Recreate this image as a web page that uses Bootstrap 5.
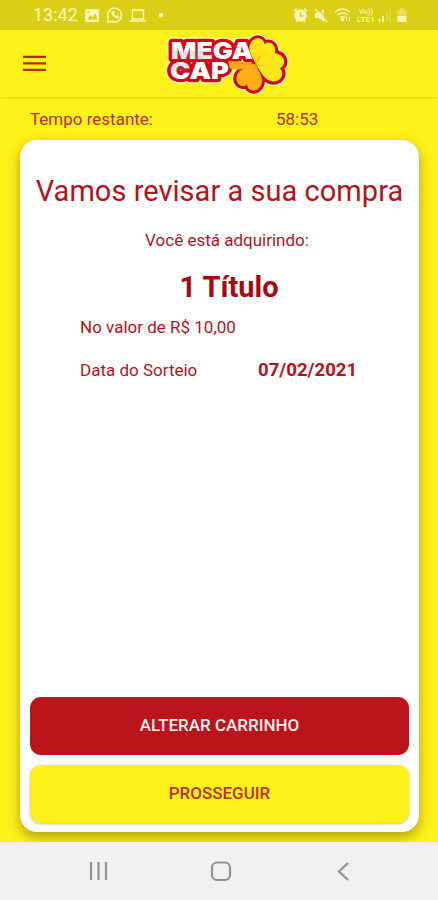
<!DOCTYPE html>
<html lang="pt-BR">
<head>
<meta charset="utf-8">
<meta name="viewport" content="width=device-width, initial-scale=1">
<title>Mega Cap</title>
<link href="https://cdn.jsdelivr.net/npm/bootstrap@5.3.0/dist/css/bootstrap.min.css" rel="stylesheet">
<style>
body{font-family:Roboto,"Liberation Sans",sans-serif;background:#fff21a;color:#b3131c;height:900px;overflow:hidden}
svg{display:block}
.status-bar{height:30px;background:#dacf16;color:#fbf6b4;padding-left:33px;padding-right:30px}
.clock{font-size:18px;line-height:30px;width:51px}
.app-bar{height:67px;padding-left:23px;box-shadow:0 1px 3px rgba(120,110,0,.22)}
.app-logo{margin-left:117px}
.timer-row{height:43px;padding:3px 30px 0;font-size:17px;color:#b5341a}
.timer-row span:first-child{width:246px}
.review-card{margin:0 19px 10px 20px;border:0;border-radius:17px;box-shadow:0 5px 12px 1px rgba(80,70,0,.42);color:#b3131c}
.review-title{font-size:29px;line-height:36px;margin-top:33px;letter-spacing:.03px}
.review-sub{font-size:17px;line-height:24px;margin-top:19px;padding-left:15px}
.review-qty{font-size:29px;line-height:36px;margin-top:17px;padding-left:19px;color:#a90810}
.detail{font-size:17px;line-height:24px;padding-left:60px}
.detail-value{margin-top:10px}
.detail-date{margin-top:19px}
.detail-label{width:178px}
.draw-date{font-size:18.6px}
.actions{padding:0 10px 9px;row-gap:10px}
.action-btn{height:58px;border-radius:11px;border:0;font-size:17px;font-weight:500}
.btn-change,.btn-change:hover{background:#bb141b;color:#fff0ee}
.btn-next,.btn-next:hover{background:#fff21a;color:#b9320f;box-shadow:0 1px 3px rgba(90,80,0,.4)}
.nav-strip{height:58px;background:#f1f1f1}
</style>
<script src="https://cdn.jsdelivr.net/npm/bootstrap@5.3.0/dist/js/bootstrap.bundle.min.js"></script>
</head>
<body class="d-flex flex-column">
<div class="status-bar d-flex align-items-center flex-shrink-0">
  <span class="clock">13:42</span>
  <svg width="84" height="20" viewBox="84 5 84 20" fill="none" stroke="currentColor" stroke-width="1.4">
    <rect x="85" y="9" width="14" height="13" rx="1.5" fill="currentColor" stroke="none"/>
    <path d="M87 19.500l3-4 2.500 2 3-4 2 6z" fill="#dacf16" stroke="none"/><circle cx="88.500" cy="12" r="1" fill="#dacf16" stroke="none"/>
    <path d="M107.500 22.300l1-3.600a7 7 0 1 1 2.700 2.600z"/><path d="M112 11.500c-2 2 3.500 8 6.500 6.500l.5-1.500-2-1-1.100 1-2.200-2.300.8-1-.9-1.900z" fill="currentColor" stroke-width=".5"/>
    <path d="M132.500 10h11v9h-11zM130 21h16"/>
    <circle cx="161" cy="15.300" r="2.200" fill="currentColor" stroke="none"/>
  </svg>
  <svg class="ms-auto" width="116" height="20" viewBox="292 5 116 20" fill="none" stroke="currentColor" stroke-width="1.500">
    <circle cx="300.500" cy="15.500" r="5.500" fill="currentColor"/><path d="M294 11l3-2.500M307 11l-3-2.500M296 22l1.500-2M305 22l-1.500-2"/><path d="M300.500 12v4h3" stroke="#dacf16" stroke-width="1.300"/>
    <path d="M315 13h4l5-4v13l-5-4h-4z" fill="currentColor" stroke="none"/><path d="M317 8l12 13" stroke="#dacf16" stroke-width="1.300"/><path d="M315 9l12 13"/>
    <path d="M335 12q7.500-6 15 0M337.500 15q5-4 10 0M340 17.500q2.500-2 5 0"/><circle cx="342.500" cy="19.500" r="1" fill="currentColor"/><path d="M346.500 21v-4M349.500 17v4" stroke-width="1.200"/>
    <g fill="currentColor" stroke="none" font-family="Roboto,sans-serif" font-weight="500"><text x="359" y="13.500" font-size="6.500" textLength="14" lengthAdjust="spacingAndGlyphs">Vo))</text><text x="357" y="22" font-size="7.500" textLength="18" lengthAdjust="spacingAndGlyphs">LTE1</text></g>
    <path d="M379.500 22v-3M383 22v-6" stroke-width="1.800"/><path d="M387 22V12M390 22V9" stroke-width="1.600" opacity=".35"/>
    <path d="M397.500 10h2.500V8h4v2h2.500v6h-9z" fill="currentColor" stroke="none" opacity=".4"/><path d="M397.500 16h9v6h-9z" fill="currentColor" stroke="none"/>
  </svg>
</div>
<header class="app-bar d-flex align-items-start flex-shrink-0">
  <svg width="23" height="67" viewBox="23 30 23 67" stroke="#b92a12" stroke-width="2.300" role="img" aria-label="Menu"><path d="M23 56.800h23M23 63.300h23M23 69.800h23"/></svg>
  <svg class="app-logo" width="126" height="64" viewBox="163 30 126 64" role="img" aria-label="Mega Cap">
    <defs>
      <linearGradient id="petal" x1="0" y1="0" x2="0" y2="1"><stop offset="0" stop-color="#fff01c"/><stop offset="1" stop-color="#ffd512"/></linearGradient>
      <path id="leaf" d="M0 0C-5-5-14-10-13-18C-12-26-3-28 0-22C3-28 12-26 13-18C14-10 5-5 0 0z"/>
      <g id="clover"><use href="#leaf" transform="translate(256 64.500) rotate(22)"/><use href="#leaf" transform="translate(256 64.500) rotate(99) scale(1.080)"/><use href="#leaf" transform="translate(256 64.500) rotate(204)"/></g>
      <g id="words" font-family="Inter,sans-serif" font-weight="900" font-size="23.500"><text x="171" y="59" textLength="82" lengthAdjust="spacingAndGlyphs">MEGA</text><text x="170" y="79" textLength="59" lengthAdjust="spacingAndGlyphs">CAP</text></g>
    </defs>
    <g stroke-linejoin="round" stroke="#fff6c0" fill="#fff6c0"><use href="#clover" stroke-width="8.500"/><use href="#words" stroke-width="9"/></g>
    <g stroke-linejoin="round" stroke="#cf0a1a" fill="#c80c1a"><use href="#clover" stroke-width="6"/><use href="#words" stroke-width="6.500"/></g>
    <path d="M228 62q14-3 28 2.500q-12 7-26 4z" fill="#f8a815"/>
    <use href="#leaf" transform="translate(256 64.500) rotate(22)" fill="url(#petal)"/>
    <use href="#leaf" transform="translate(256 64.500) rotate(99) scale(1.080)" fill="#ffe719"/>
    <use href="#leaf" transform="translate(256 64.500) rotate(204)" fill="#fbae16"/>
    <path d="M256 64.500l4-9M256 64.500l9 2M256 64.500l-3 8M256 64.500l-14-1" stroke="#b77a12" stroke-width=".5" opacity=".7"/>
    <use href="#words" fill="#fff"/>
    <path d="M171 51h42v9h-42zM171 64h18v7h-18z" fill="#777" opacity=".2"/>
  </svg>
</header>
<div class="timer-row d-flex align-items-center flex-shrink-0"><span>Tempo restante:</span><span>58:53</span></div>
<main class="review-card card flex-grow-1">
  <h1 class="review-title fw-normal text-center text-nowrap mb-0">Vamos revisar a sua compra</h1>
  <p class="review-sub text-center mb-0">Você está adquirindo:</p>
  <h2 class="review-qty fw-bold text-center mb-0">1 Título</h2>
  <div class="detail detail-value">No valor de R$ 10,00</div>
  <div class="detail detail-date d-flex"><span class="detail-label">Data do Sorteio</span><strong class="draw-date">07/02/2021</strong></div>
  <div class="actions d-grid mt-auto">
    <button type="button" class="btn btn-change action-btn">ALTERAR CARRINHO</button>
    <button type="button" class="btn btn-next action-btn">PROSSEGUIR</button>
  </div>
</main>
<nav class="nav-strip flex-shrink-0 position-relative">
  <svg width="438" height="58" viewBox="0 842 438 58" fill="none" stroke="#929292" stroke-width="2.200"><path d="M91 862v18M98.500 862v18M106 862v18"/><rect x="212" y="862.500" width="18" height="17.500" rx="5"/><path d="M348 863l-9 8.500 9 8.500"/></svg>
</nav>
</body>
</html>
